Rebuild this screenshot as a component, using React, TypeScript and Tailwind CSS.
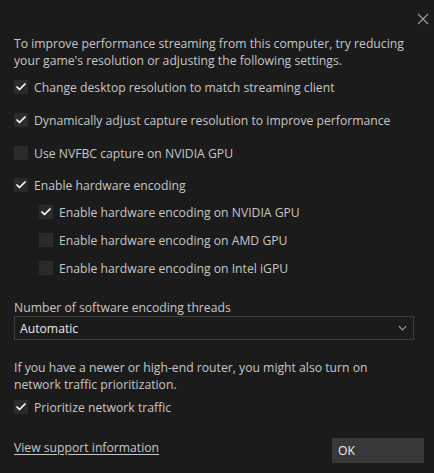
import { Check } from "lucide-react";

function Box({ checked }: { checked: boolean }) {
  return (
    <span className="w-[14px] h-[14px] bg-[#2b2b2b] flex items-center justify-center shrink-0">
      {checked && <Check className="w-[12px] h-[12px] text-white" strokeWidth={3.5} />}
    </span>
  );
}

function Row({ checked, label, sub = false, className = "" }: { checked: boolean; label: string; sub?: boolean; className?: string }) {
  return (
    <div className={`flex items-center gap-[6px] h-[16px] ${sub ? "pl-[25px]" : ""} ${className}`}>
      <Box checked={checked} />
      <span>{label}</span>
    </div>
  );
}

export default function App() {
  return (
    <div
      className="w-[434px] h-[473px] bg-[#1b1b1b] text-[#c6c6c6] text-[12.2px] leading-[17px] relative overflow-hidden"
      style={{ fontFamily: '"Open Sans", "Noto Sans", sans-serif' }}
    >
      <button className="absolute top-[13px] right-[5px] w-[12px] h-[12px] text-[#9a9a9a]">
        <svg viewBox="0 0 12 12" className="w-full h-full" stroke="currentColor" strokeWidth="1.2">
          <path d="M1 1 L11 11 M11 1 L1 11" />
        </svg>
      </button>

      <div className="px-[14px] pt-[35px] flex flex-col">
        <p>
          To improve performance streaming from this computer, try reducing
          <br />
          your game's resolution or adjusting the following settings.
        </p>
        <Row checked label="Change desktop resolution to match streaming client" className="mt-[10px]" />
        <Row checked label="Dynamically adjust capture resolution to improve performance" className="mt-[17px]" />
        <Row checked={false} label="Use NVFBC capture on NVIDIA GPU" className="mt-[17px]" />
        <Row checked label="Enable hardware encoding" className="mt-[16px]" />
        <Row checked sub label="Enable hardware encoding on NVIDIA GPU" className="mt-[11px]" />
        <Row checked={false} sub label="Enable hardware encoding on AMD GPU" className="mt-[12px]" />
        <Row checked={false} sub label="Enable hardware encoding on Intel iGPU" className="mt-[12px]" />

        <div className="mt-[23px]">Number of software encoding threads</div>
        <div className="w-[400px] h-[24px] border border-[#3e3e3e] flex items-center justify-between pl-[5px] pr-[6px] text-[#e8e8e8]">
          <span>Automatic</span>
          <svg viewBox="0 0 10 6" className="w-[9px] h-[6px] text-[#a0a0a0]" fill="none" stroke="currentColor" strokeWidth="1.3">
            <path d="M1 1 L5 5 L9 1" />
          </svg>
        </div>

        <p className="mt-[19px]">
          If you have a newer or high-end router, you might also turn on
          <br />
          network traffic prioritization.
        </p>
        <Row checked label="Prioritize network traffic" className="mt-[6px]" />

        <div className="mt-[23px] flex items-start justify-between">
          <span className="underline underline-offset-2 mt-[1px]">View support information</span>
          <button className="w-[92px] h-[25px] bg-[#383838] text-[#f0f0f0] text-left pl-[6px] mr-[-4px]">OK</button>
        </div>
      </div>
    </div>
  );
}
